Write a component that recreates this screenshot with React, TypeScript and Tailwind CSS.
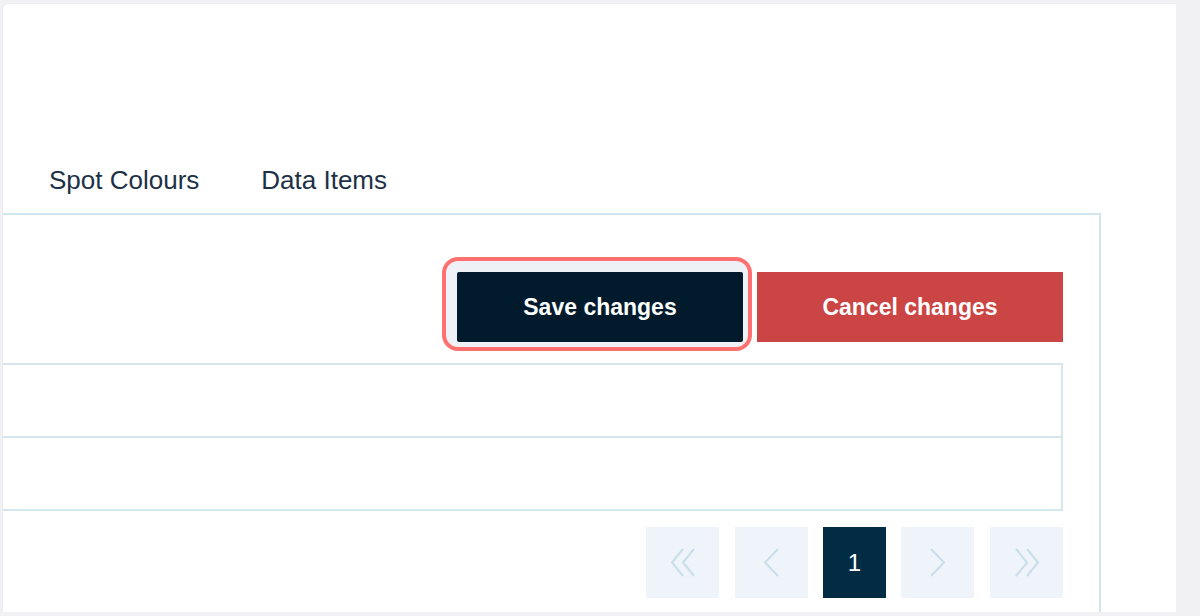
const font = { fontFamily: '"Liberation Sans", Arial, sans-serif' };

function Chevron({ dir, double }: { dir: "left" | "right"; double?: boolean }) {
  const flip = dir === "right" ? "scale(-1,1)" : undefined;
  if (double) {
    return (
      <svg width="26" height="29" viewBox="0 0 26 29" fill="none" stroke="currentColor" strokeWidth="2">
        <g transform={flip} style={{ transformOrigin: "13px 14.5px" }}>
          <polyline points="13,1 2,14.5 13,28" />
          <polyline points="24,1 13,14.5 24,28" />
        </g>
      </svg>
    );
  }
  return (
    <svg width="17" height="29" viewBox="0 0 17 29" fill="none" stroke="currentColor" strokeWidth="2">
      <g transform={flip} style={{ transformOrigin: "8.5px 14.5px" }}>
        <polyline points="15,1 2,14.5 15,28" />
      </g>
    </svg>
  );
}

function PageBox({ children, active }: { children: React.ReactNode; active?: boolean }) {
  return (
    <div
      className={
        active
          ? "flex h-[71px] w-[63px] items-center justify-center bg-[#022b44] text-[24px] text-white"
          : "flex h-[71px] w-[73px] items-center justify-center bg-[#eef4f9] text-[#cadeea]"
      }
    >
      {children}
    </div>
  );
}

export default function App() {
  return (
    <div className="flex h-[616px] w-[1200px] overflow-hidden bg-[#f1f0f3]" style={font}>
      <div className="mt-[3px] ml-[2px] flex h-[609px] w-[1174px] flex-col rounded-tl-md border-t border-l border-[#ebebf2] bg-white">
        {/* tabs */}
        <div className="mt-[144px] flex h-[65px] items-center gap-[62px] pl-[46px] text-[26px] text-[#1c3145]">
          <span>Spot Colours</span>
          <span>Data Items</span>
        </div>

        {/* panel */}
        <div className="flex w-[1098px] flex-1 flex-col border-t-2 border-r-2 border-[#d3e5ef] pr-[36px]">
          <div className="mt-[57px] flex justify-end gap-[14px]">
            <div className="relative">
              <span className="absolute -top-[15px] -left-[15px] -right-[9px] -bottom-[9px] rounded-[16px] border-4 border-[#ff7070] bg-[#eef1f5]" />
              <button className="relative flex h-[70px] w-[286px] items-center justify-center rounded-[2px] bg-[#011b2d] text-[23px] font-bold text-white">
                Save changes
              </button>
            </div>
            <button className="flex h-[70px] w-[306px] items-center justify-center bg-[#cb4545] text-[23px] font-bold text-white">
              Cancel changes
            </button>
          </div>

          {/* table */}
          <div className="mt-[21px] flex flex-col border-2 border-l-0 border-[#d5e6ef]">
            <div className="h-[73px] border-b-2 border-[#d5e6ef]" />
            <div className="h-[71px]" />
          </div>

          {/* pagination */}
          <div className="mt-[16px] flex justify-end gap-[15px]">
            <PageBox>
              <Chevron dir="left" double />
            </PageBox>
            <div className="ml-px">
              <PageBox>
                <Chevron dir="left" />
              </PageBox>
            </div>
            <PageBox active>1</PageBox>
            <PageBox>
              <Chevron dir="right" />
            </PageBox>
            <div className="ml-px">
              <PageBox>
                <Chevron dir="right" double />
              </PageBox>
            </div>
          </div>
        </div>
      </div>
    </div>
  );
}
